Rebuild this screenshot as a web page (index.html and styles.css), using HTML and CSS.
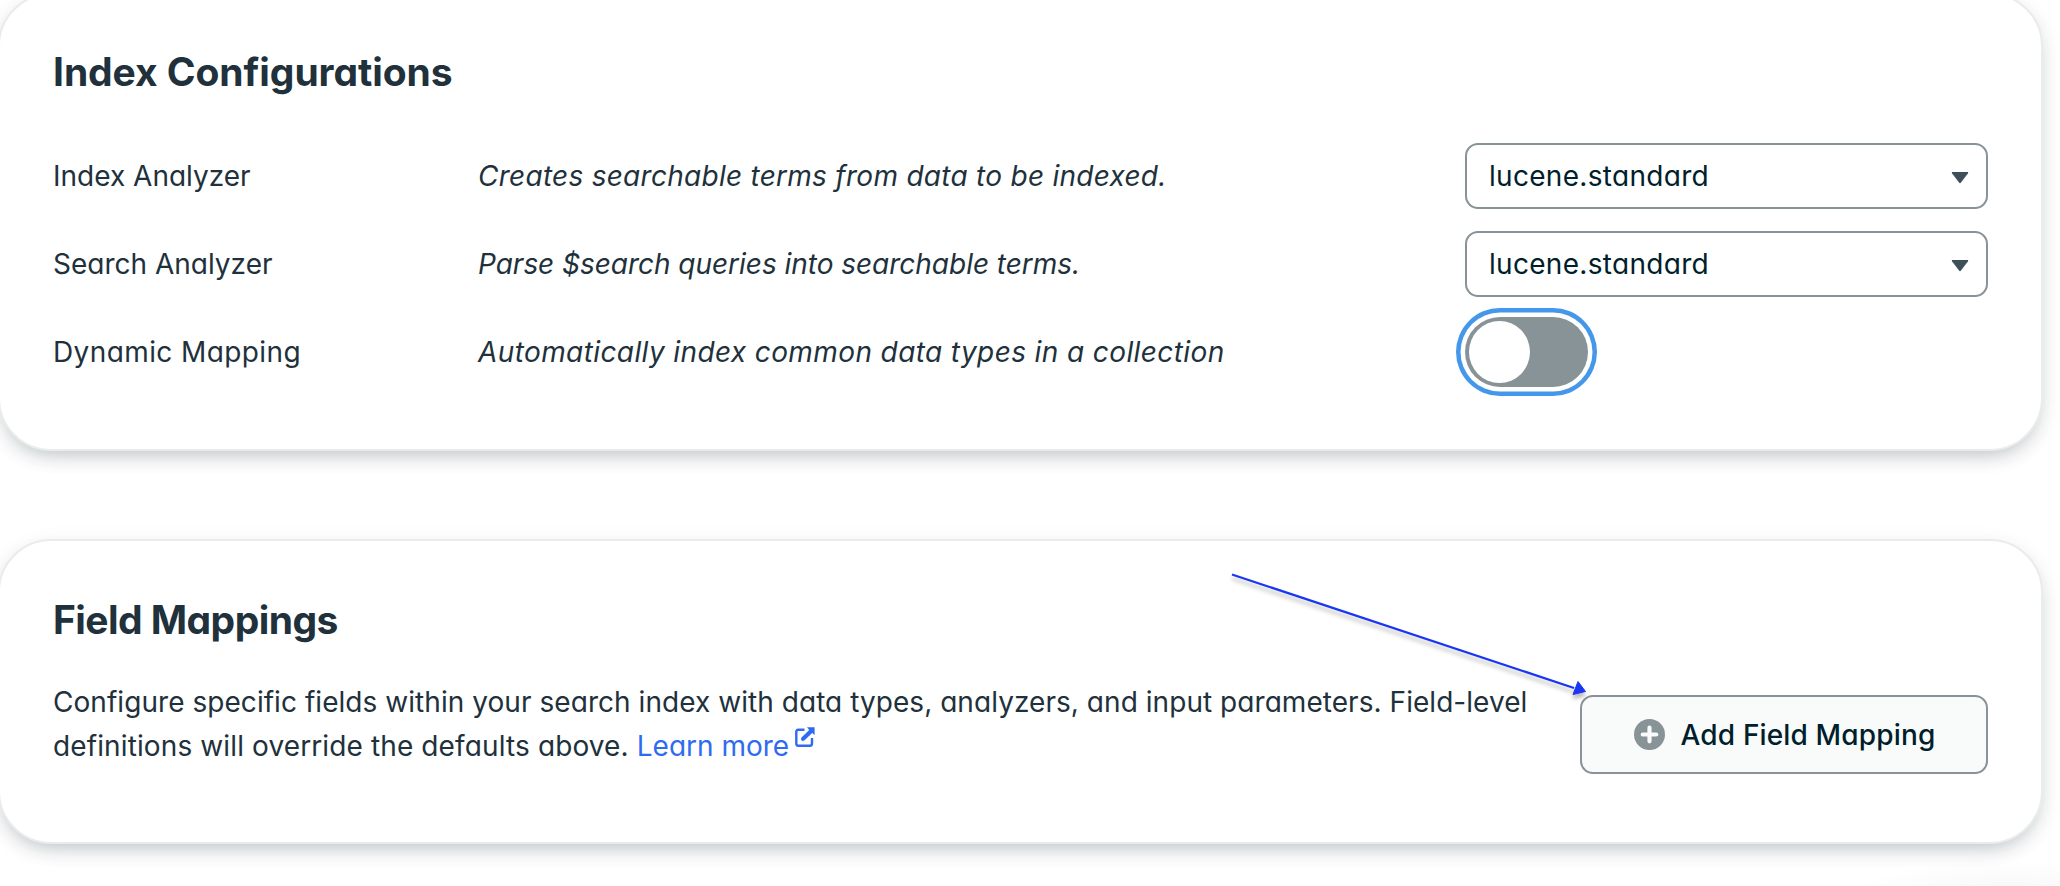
FILE: index.html
```html
<!DOCTYPE html>
<html lang="en">
<head>
<meta charset="utf-8">
<title>Index Configurations</title>
<link rel="stylesheet" href="styles.css">
</head>
<body>
<main class="page">
  <section class="card card-config">
    <h2 class="title">Index Configurations</h2>
    <div class="rows">
      <div class="row">
        <span class="label">Index Analyzer</span>
        <em class="desc desc-index">Creates searchable terms from data to be indexed.</em>
        <div class="select"><span class="select-value">lucene.standard</span>
          <svg class="caret" viewBox="0 0 18 14"><path d="M1.600 1h14.800q1.400 0 .6 1.200L10 11.600q-1 1.200-2 0L1 2.200q-.8-1.200.6-1.200z" fill="#3d4f58"/></svg>
        </div>
      </div>
      <div class="row">
        <span class="label">Search Analyzer</span>
        <em class="desc desc-search">Parse $search queries into searchable terms.</em>
        <div class="select"><span class="select-value">lucene.standard</span>
          <svg class="caret" viewBox="0 0 18 14"><path d="M1.600 1h14.800q1.400 0 .6 1.200L10 11.600q-1 1.200-2 0L1 2.200q-.8-1.200.6-1.200z" fill="#3d4f58"/></svg>
        </div>
      </div>
      <div class="row">
        <span class="label label-dynamic">Dynamic Mapping</span>
        <em class="desc desc-dynamic">Automatically index common data types in a collection</em>
        <div class="toggle" role="switch" aria-checked="false"><span class="knob"></span></div>
      </div>
    </div>
  </section>

  <section class="card card-fields">
    <h2 class="title title-fields">Field Mappings</h2>
    <div class="fields-body">
      <p class="copy"><span class="copy-lead">Configure specific fields within your search index with data types, analyzers, and input parameters. Field-level</span><br>definitions will override the defaults above. <a class="link">Learn more<svg class="external" viewBox="0 0 20 20"><path d="M9.500 2.800H3.200Q1.300 2.800 1.300 4.800V16.500Q1.300 18.700 3.200 18.700H15Q17 18.700 17 16.500V11" fill="none" stroke="#2f6bf0" stroke-width="2.400"/><path d="M12 .2H19.600V8L17.200 5.900 9.300 13.400Q7.700 14.400 6.400 13.300 5.300 11.900 6.700 10.300L14.200 2.900z" fill="#2f6bf0"/></svg></a></p>
      <button class="add">
        <svg class="plus" viewBox="0 0 31 31"><circle cx="15.500" cy="15.500" r="15.500" fill="#889397"/><path d="M15.500 8.700v13.600M8.700 15.500h13.600" stroke="#f9fbfa" stroke-width="4.200" stroke-linecap="round"/></svg>
        <span>Add Field Mapping</span>
      </button>
    </div>
  </section>
</main>
<svg class="arrow" viewBox="0 0 370 140">
  <path d="M2 5.500L344 119" stroke="#1a36f5" stroke-width="2.300"/>
  <path d="M348 112.500L355.500 122.500 343 125.500z" fill="#1a36f5" stroke="#1a36f5"/>
</svg>
</body>
</html>
```
FILE: styles.css
```css
* { box-sizing: border-box; }

body {
  margin: 0;
  height: 886px;
  overflow: hidden;
  background: radial-gradient(ellipse 170px 40px at 2010px 900px, rgba(0, 0, 0, 0.04), transparent) #fff;
  color: #21313c;
  font-family: Inter, "Liberation Sans", sans-serif;
  font-size: 28px;
  font-feature-settings: "cv11" 1;
}

.page {
  width: 2045px;
  margin-left: -2px;
  margin-top: -7px;
  display: flex;
  flex-direction: column;
  gap: 88px;
}

.card {
  border: 2px solid #e8edeb;
  border-radius: 53px;
  background: #fff;
  box-shadow: 0 9px 22px -9px rgba(0, 30, 43, 0.32), 0 5px 26px rgba(0, 30, 43, 0.05);
  padding: 0 53px;
}

.card-config { height: 458px; padding-top: 53px; }
.card-fields { height: 305px; padding-top: 55px; }

.title {
  margin: 0;
  font-size: 39px;
  line-height: 48px;
  font-weight: 700;
  letter-spacing: -0.07px;
}
.title-fields { letter-spacing: -0.55px; }

.rows {
  display: grid;
  grid-auto-rows: 66px;
  row-gap: 22px;
  margin-top: 47px;
}

.row {
  display: grid;
  grid-template-columns: 425px 987px 523px;
  align-items: center;
  white-space: nowrap;
}

.label-dynamic { letter-spacing: 0.4px; }
.desc-index { letter-spacing: 0.27px; }
.desc-search { letter-spacing: -0.03px; }
.desc-dynamic { letter-spacing: 0.39px; }

.select {
  height: 66px;
  border: 2px solid #889397;
  border-radius: 13px;
  padding: 0 17px 0 22px;
  display: flex;
  align-items: center;
  justify-content: space-between;
  color: #001e2b;
  letter-spacing: 0.3px;
}
.caret { width: 18px; height: 14px; margin-top: 3px; }

.toggle {
  width: 123px;
  height: 70px;
  margin: -2px 0;
  padding: 4px;
  border-radius: 35px;
  background: #889397;
  box-shadow: 0 0 0 4.500px #fff, 0 0 0 9px #4497e9;
}
.knob {
  display: block;
  width: 61px;
  height: 62px;
  border-radius: 50%;
  background: #fff;
}

.fields-body {
  display: flex;
  justify-content: space-between;
  margin-top: 36px;
}

.copy {
  margin: 0;
  line-height: 44px;
  white-space: nowrap;
  letter-spacing: 0.12px;
}
.copy-lead { letter-spacing: 0.05px; }
.link { color: #2f6bf0; letter-spacing: 0; }
.external { width: 20px; height: 20px; margin-left: 6px; vertical-align: 9px; }

.add {
  width: 408px;
  height: 79px;
  margin-top: 15px;
  border: 2px solid #889397;
  border-radius: 13px;
  background: #f9fbfa;
  color: #001e2b;
  font: inherit;
  font-weight: 550;
  letter-spacing: 0.15px;
  font-feature-settings: inherit;
  display: flex;
  align-items: center;
  justify-content: center;
  gap: 16px;
  padding: 0 0 0 1px;
  white-space: nowrap;
}
.plus { width: 31px; height: 31px; }

/* Annotation drawn over the cards, pointing at the button */
.arrow {
  position: absolute;
  left: 1230px;
  top: 569px;
  width: 370px;
  height: 140px;
  filter: drop-shadow(0 4px 2px rgba(0, 0, 0, 0.28));
}
```
